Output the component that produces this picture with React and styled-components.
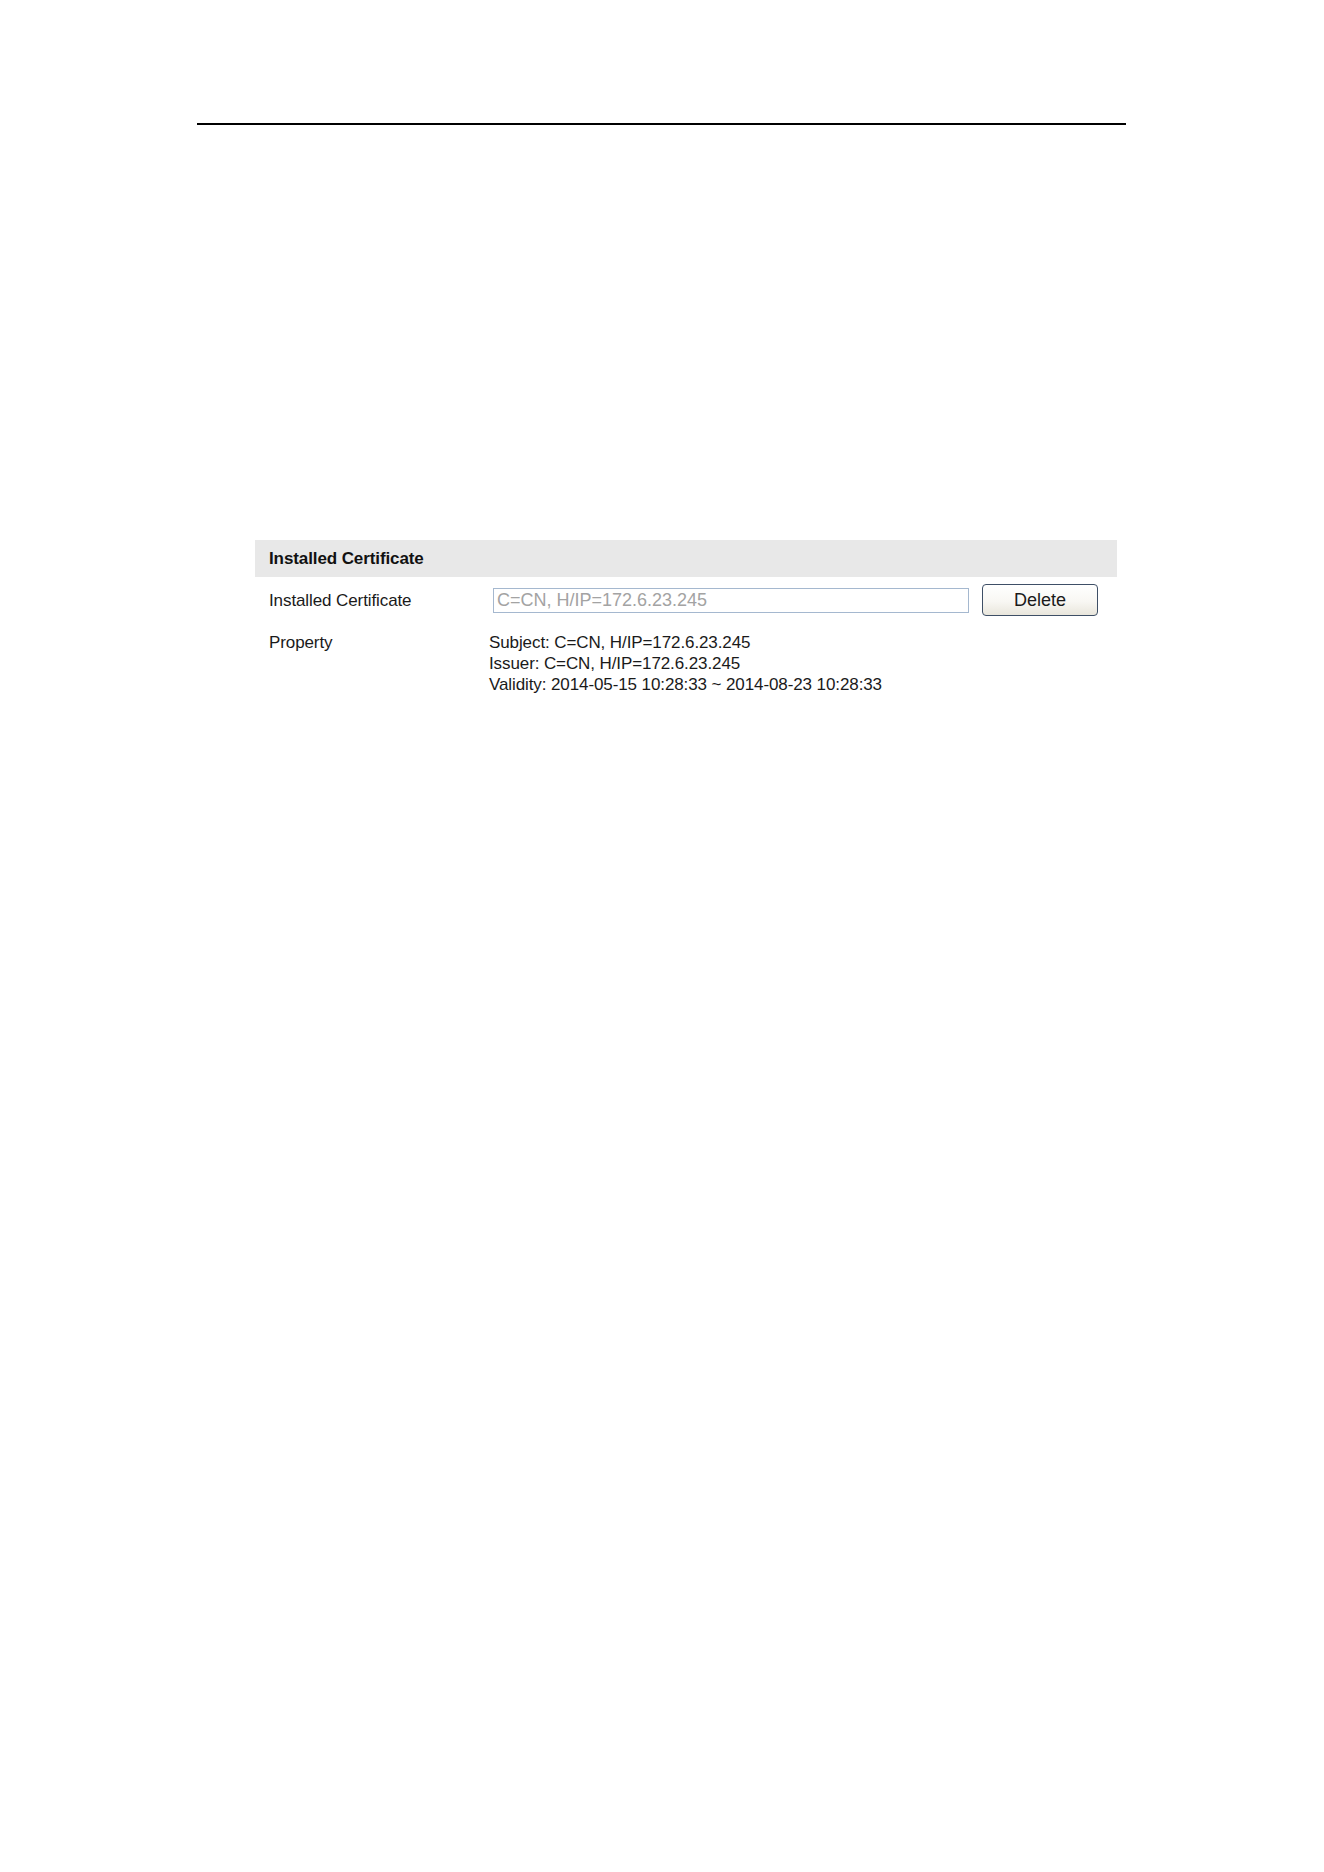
import styled, { createGlobalStyle } from "styled-components";

const GlobalStyle = createGlobalStyle`
  html, body {
    margin: 0;
    padding: 0;
    background: #ffffff;
  }
  body {
    font-family: "Liberation Sans", Arial, sans-serif;
    color: #1a1a1a;
  }
`;

const Page = styled.div`
  width: 1324px;
  min-height: 1872px;
  padding-top: 123px;
  box-sizing: border-box;
`;

const HeaderRule = styled.hr`
  margin: 0 0 0 197px;
  width: 929px;
  height: 2px;
  border: none;
  background: #000000;
`;

const Panel = styled.section`
  margin: 415px 0 0 255px;
  width: 862px;
  font-size: 17px;
  line-height: 21px;
  letter-spacing: -0.1px;
`;

const PanelTitle = styled.div`
  height: 37px;
  line-height: 38px;
  padding-left: 14px;
  background: #e8e8e8;
  font-weight: bold;
  color: #111111;
`;

const Row = styled.div`
  display: grid;
  grid-template-columns: 234px 1fr;
  align-items: ${(p) => (p.$top ? "start" : "center")};
  padding: ${(p) => p.$pad};
`;

const Label = styled.div`
  padding-left: 14px;
  color: #1a1a1a;
`;

const Field = styled.div`
  display: flex;
  align-items: center;
  gap: 13px;
`;

const TextInput = styled.input`
  box-sizing: border-box;
  width: 476px;
  height: 25px;
  margin-left: 4px;
  padding: 0 3px;
  border: 1px solid #a5b8cf;
  font-family: "Liberation Sans", Arial, sans-serif;
  font-size: 18px;
  color: #a3a3a3;
  background: #ffffff;
  outline: none;
`;

const Button = styled.button`
  box-sizing: border-box;
  width: 116px;
  height: 32px;
  border: 1px solid #3e4f66;
  border-radius: 4px;
  background: linear-gradient(#ffffff 0%, #f8f7f3 55%, #e9e6dc 100%);
  font-family: "Liberation Sans", Arial, sans-serif;
  font-size: 18px;
  color: #1a1a1a;
  padding: 0;
`;

const PropertyList = styled.div`
  display: flex;
  flex-direction: column;
`;

export default function App() {
  return (
    <>
      <GlobalStyle />
      <Page>
        <HeaderRule />
        <Panel>
          <PanelTitle>Installed Certificate</PanelTitle>
          <Row $pad="7px 0">
            <Label>Installed Certificate</Label>
            <Field>
              <TextInput readOnly value="C=CN, H/IP=172.6.23.245" />
              <Button>Delete</Button>
            </Field>
          </Row>
          <Row $top $pad="9px 0 0">
            <Label>Property</Label>
            <PropertyList>
              <span>Subject: C=CN, H/IP=172.6.23.245</span>
              <span>Issuer: C=CN, H/IP=172.6.23.245</span>
              <span>Validity: 2014-05-15 10:28:33 ~ 2014-08-23 10:28:33</span>
            </PropertyList>
          </Row>
        </Panel>
      </Page>
    </>
  );
}
